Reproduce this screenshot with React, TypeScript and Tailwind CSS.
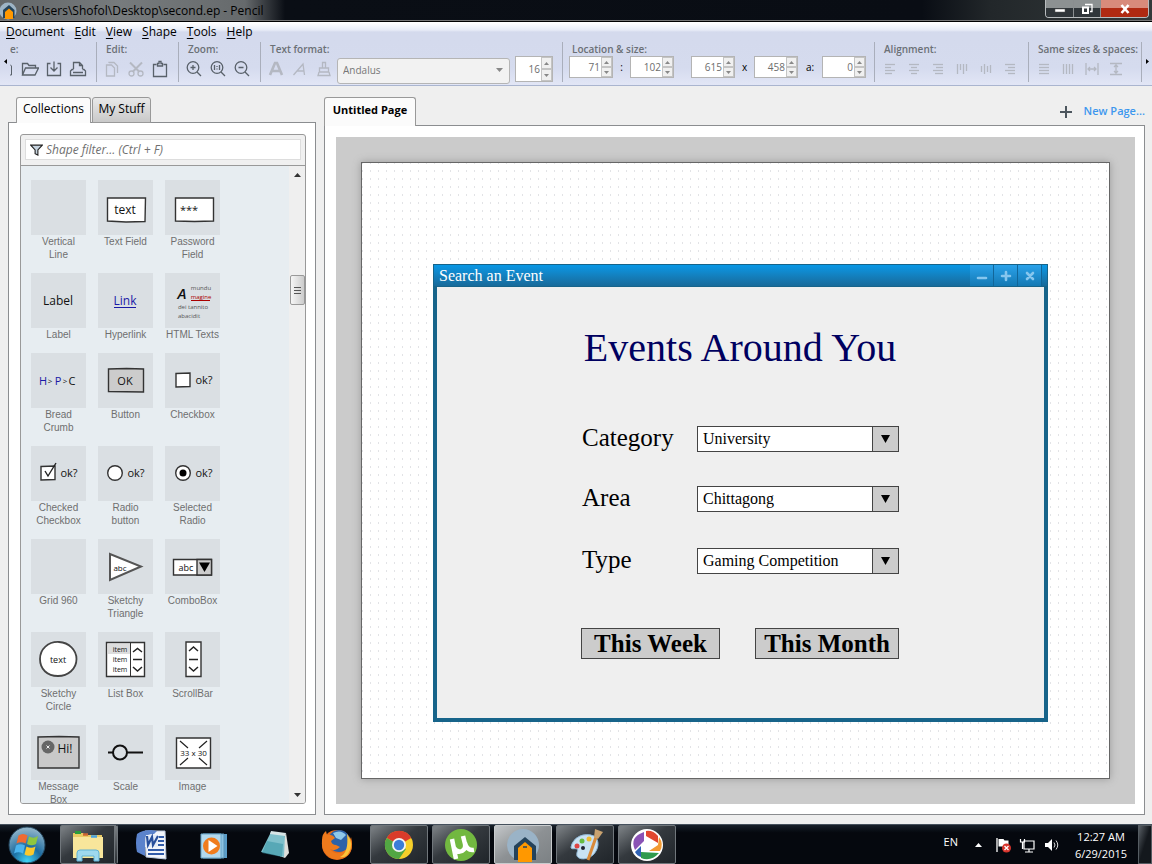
import type { ReactNode } from "react";

const NAVY = "#59616a";
const FAINT = "#b4b8c2";

function Ico({ children, faint = false }: { children: ReactNode; faint?: boolean }) {
  return (
    <svg width="18" height="18" viewBox="0 0 18 18" fill="none" stroke={faint ? FAINT : NAVY} strokeWidth="1.3" aria-hidden="true">
      {children}
    </svg>
  );
}

function Tool({ label, children }: { label: string; children: ReactNode }) {
  return (
    <button type="button" aria-label={label} className="flex h-6 w-6 shrink-0 items-center justify-center">
      {children}
    </button>
  );
}

function Group({ title, width, children }: { title: string; width: string; children: ReactNode }) {
  return (
    <div className={`flex h-10 shrink-0 flex-col border-r border-[#a9aebb] ${width}`}>
      <div className="h-[14px] pl-[9px] text-[10px] leading-[15px] font-semibold whitespace-nowrap text-[#6b7076]">{title}</div>
      <div className="flex h-[26px] items-center pl-[3px]">{children}</div>
    </div>
  );
}

function Spin({ label, value, tall = false }: { label: string; value: string; tall?: boolean }) {
  return (
    <div className={`flex shrink-0 border border-[#b4b4b4] bg-white ${tall ? "h-[26px] w-[38px]" : "mb-1 h-[22px] w-11"}`}>
      <input aria-label={label} defaultValue={value} className="min-w-0 flex-1 bg-white text-right text-[10px] text-[#6d6d6d] outline-none" />
      <div className="flex w-3 flex-col justify-between pl-px">
        {["up", "down"].map((d) => (
          <button key={d} type="button" aria-label={`${label} ${d}`} className="flex flex-1 items-center justify-center border border-[#c4c4c4] bg-[#f0f0f0]">
            <svg width="5" height="3" viewBox="0 0 5 3" aria-hidden="true">
              <path d={d === "up" ? "M0 3 2.5 0 5 3z" : "M0 0h5L2.5 3z"} fill="#888" />
            </svg>
          </button>
        ))}
      </div>
    </div>
  );
}

function TitleBar() {
  return (
    <header className="flex h-[22px] shrink-0 items-start border-b border-black bg-[linear-gradient(90deg,#626668_0px,#777b7d_120px,#666a6c_245px,#0a0e15_285px,#090d14_80%,#22272a_86%,#343a3b_100%)] shadow-[inset_0_-1px_0_#777]">
      <svg width="18" height="20" viewBox="0 0 18 20" className="shrink-0" aria-hidden="true">
        <circle cx="8" cy="11" r="8.5" fill="#9db4c6" />
        <path d="M3 18V10l6-5 5.500 5v8z" fill="#23435a" />
        <path d="M5 19v-7l4-3.500 4 3.500v7z" fill="#ff9800" />
      </svg>
      <h1 className="flex-1 pl-[3px] text-[12px] leading-[21px] font-normal whitespace-nowrap text-black">C:\Users\Shofol\Desktop\second.ep - Pencil</h1>
      <div className="mr-[3px] flex h-[18px] overflow-hidden rounded-b border border-t-0 border-[#b8bcbe]">
        <button type="button" aria-label="Minimize" className="flex w-7 items-center justify-center border-r border-[#8a8e90] bg-linear-to-b from-[#8c9192] from-45% to-[#30363a] to-50%">
          <svg width="12" height="12" aria-hidden="true"><path d="M1 6h10v3H1z" fill="#fff" stroke="#555" strokeWidth=".5" /></svg>
        </button>
        <button type="button" aria-label="Restore" className="flex w-[27px] items-center justify-center border-r border-[#8a8e90] bg-linear-to-b from-[#8c9192] from-45% to-[#30363a] to-50%">
          <svg width="12" height="12" fill="none" stroke="#fff" aria-hidden="true"><path d="M4 1.500h7v7H9" strokeWidth="1.300" /><path d="M2 4.500h5v5.500H2z" strokeWidth="2" /></svg>
        </button>
        <button type="button" aria-label="Close" className="flex w-[47px] items-center justify-center bg-linear-to-b from-[#d88b7b] from-45% to-[#b02a12] to-50%">
          <svg width="12" height="12" aria-hidden="true"><path d="M2.500 2l7 8M9.500 2l-7 8" stroke="#fff" strokeWidth="2.600" /></svg>
        </button>
      </div>
    </header>
  );
}

function MenuBar() {
  return (
    <nav className="flex h-5 shrink-0 gap-[10px] bg-linear-to-b from-white from-5% via-[#e8ecf7] via-40% to-[#d4daed] to-50% pl-[6px] text-[12px] leading-5 text-black">
      {["Document", "Edit", "View", "Shape", "Tools", "Help"].map((m) => (
        <button key={m} type="button"><span className="underline underline-offset-2">{m[0]}</span>{m.slice(1)}</button>
      ))}
    </nav>
  );
}

function Bars({ rows, vertical = false }: { rows: number[][]; vertical?: boolean }) {
  return (
    <Ico faint>
      {rows.map(([at, a, b], i) => (
        <path key={i} d={vertical ? `M${at} ${a}V${b}` : `M${a} ${at}H${b}`} />
      ))}
    </Ico>
  );
}

function Toolbar() {
  return (
    <div className="flex h-11 shrink-0 overflow-hidden border-b border-[#aab5cf] bg-linear-to-b from-[#d4daed] via-[#d5dbee] via-60% to-[#e2e6f6]">
      <div className="flex w-[10px] shrink-0 justify-center pt-[17px]"><svg width="3" height="5" aria-hidden="true"><path d="M3 0v5L0 2.500z" /></svg></div>
      <div className="flex h-10 w-[87px] shrink-0 flex-col overflow-hidden border-r border-[#a9aebb]">
        <div className="h-[14px] text-[10px] leading-[15px] font-semibold text-[#6b7076]">e:</div>
        <div className="flex h-[26px] items-center">
          <svg width="8" height="18" viewBox="0 0 8 18" fill="none" stroke={NAVY} aria-hidden="true"><path d="M0 4.500l1.500 1.500V15H0" /></svg>
          <Tool label="Open"><Ico><path d="M1.500 15V3.500h5l1.500 2h6.500V8M1.500 15l3-7h13l-3.500 7z" /></Ico></Tool>
          <Tool label="Save"><Ico><path d="M5.500 3.500h-3v12h13v-12h-3M9 1.500V11M5.500 7.500 9 11l3.500-3.500" /></Ico></Tool>
          <Tool label="Print"><Ico><path d="M4.500 9V2.500h6l3 3V9M10.500 2.500v3h3M4.500 9.500H3L1.500 11v4.500h15V11L15 9.500h-1.500M4 12.500h10" /></Ico></Tool>
        </div>
      </div>
      <Group title="Edit:" width="w-[82px]">
        <Tool label="Copy"><Ico faint><path d="M3.500 5v11h8v-8l-3-3zM6 3V2.500h5l3.500 3.500v7" /></Ico></Tool>
        <Tool label="Cut"><Ico faint><circle cx="4.500" cy="13.500" r="2.500" /><circle cx="13.500" cy="13.500" r="2.500" /><path d="M3 2.500 12 11.500M15 2.500 6 11.500" strokeWidth="2" /></Ico></Tool>
        <Tool label="Paste"><Ico><path d="M5.500 4.500h-3v12h13v-12h-3M6.500 6V3.500h1.500V1.500h2v2h1.500V6z" /></Ico></Tool>
      </Group>
      <Group title="Zoom:" width="w-[82px]">
        <Tool label="Zoom in"><Ico><circle cx="8" cy="7.500" r="5.800" /><path d="M12 12l4 4M5.500 7.500h5M8 5v5" /></Ico></Tool>
        <Tool label="Actual size"><Ico><circle cx="8" cy="7.500" r="5.800" /><path d="M12 12l4 4M5.500 5v5M10.500 5v5M8 6v1M8 8.500v1" /></Ico></Tool>
        <Tool label="Zoom out"><Ico><circle cx="8" cy="7.500" r="5.800" /><path d="M12 12l4 4M5.500 7.500h5" /></Ico></Tool>
      </Group>
      <Group title="Text format:" width="w-[302px]">
        <Tool label="Bold"><Ico faint><path d="M3 15 8 3h2l5 12M5.500 11h7" strokeWidth="2.600" /></Ico></Tool>
        <Tool label="Italic"><Ico faint><path d="M2.500 15 12 4l1.500 11M6 11h7" /></Ico></Tool>
        <Tool label="Clear format"><Ico faint><path d="M7.500 8V2.500h3V8M4.500 8h9v4h-9zM4 12l-1 3.500h12L14 12" /></Ico></Tool>
        <div className="relative mr-[5px] ml-px h-[26px] w-[173px] shrink-0">
          <select aria-label="Font" className="h-full w-full appearance-none rounded-[3px] border border-[#b5b5b5] bg-[#f2f2f2] pl-[5px] text-[10px] text-[#777] outline-none"><option>Andalus</option></select>
          <svg width="7" height="4" className="pointer-events-none absolute top-3 right-[7px]" aria-hidden="true"><path d="M0 0h7L3.500 4z" fill="#888" /></svg>
        </div>
        <Spin label="Font size" value="16" tall />
      </Group>
      <Group title="Location & size:" width="w-[312px]">
        <div className="flex items-center pl-[3px] text-[10px] text-black">
          <Spin label="X" value="71" /><span className="w-[17px] pb-1 text-center">:</span>
          <Spin label="Y" value="102" /><span className="w-[17px]" />
          <Spin label="Width" value="615" /><span className="w-[19px] pb-1 text-center">x</span>
          <Spin label="Height" value="458" /><span className="w-6 pb-1 text-center">a:</span>
          <Spin label="Angle" value="0" />
        </div>
      </Group>
      <Group title="Alignment:" width="w-[154px]">
        <Tool label="Align left"><Bars rows={[[4.5, 4, 14], [7.5, 4, 10], [10.5, 4, 14], [13.5, 4, 11]]} /></Tool>
        <Tool label="Align centre"><Bars rows={[[4.5, 4, 14], [7.5, 6, 12], [10.5, 4, 14], [13.5, 6, 12]]} /></Tool>
        <Tool label="Align right"><Bars rows={[[4.5, 4, 14], [7.5, 7, 14], [10.5, 4, 14], [13.5, 6, 14]]} /></Tool>
        <Tool label="Align top"><Bars vertical rows={[[4.5, 4, 14], [7.5, 4, 10], [10.5, 4, 14], [13.5, 4, 11]]} /></Tool>
        <Tool label="Align middle"><Bars vertical rows={[[4.5, 6, 12], [7.5, 4, 14], [10.5, 6, 12], [13.5, 5, 13]]} /></Tool>
        <Tool label="Align bottom"><Bars rows={[[4.5, 4, 14], [7.5, 7, 14], [10.5, 4, 14], [13.5, 7, 14]]} /></Tool>
      </Group>
      <Group title="Same sizes & spaces:" width="w-[113px]">
        <Tool label="Same width"><Bars rows={[[4.5, 4, 14], [7.5, 4, 14], [10.5, 4, 14], [13.5, 4, 14]]} /></Tool>
        <Tool label="Same height"><Bars vertical rows={[[4.5, 4, 14], [7.5, 4, 14], [10.5, 4, 14], [13.5, 4, 14]]} /></Tool>
        <Tool label="Horizontal spacing"><Ico faint><path d="M3 3v12M15 3v12M5 9h8M7 7 5 9l2 2M11 7l2 2-2 2" /></Ico></Tool>
        <Tool label="Vertical spacing"><Ico faint><path d="M3 3.500h12M3 14.500h12M9 5v8M7 7l2-2 2 2M7 11l2 2 2-2" /></Ico></Tool>
      </Group>
      <div className="flex flex-1 justify-center pt-[17px]"><svg width="3" height="5" aria-hidden="true"><path d="M0 0v5l3-2.500z" /></svg></div>
    </div>
  );
}

function T({ x, y, s = 11, fill = "#111", bold = false, children }: { x: number; y: number; s?: number; fill?: string; bold?: boolean; children: ReactNode }) {
  return <text x={x} y={y} fontSize={s} fill={fill} textAnchor="middle" stroke="none" fontWeight={bold ? 600 : 500} fontStyle={bold ? "italic" : "normal"}>{children}</text>;
}

const box = { fill: "#fff", stroke: "#333", strokeWidth: 1.4 };

const shapes: { name: string; art: ReactNode }[] = [
  { name: "Vertical\nLine", art: null },
  { name: "Text Field", art: <><path d="M9.500 18h38l-.5 23.500-19 .5-18.500-1z" {...box} /><T x={27} y={34} s={12}>text</T></> },
  { name: "Password\nField", art: <><path d="M10.500 18h38v23l-19 .500-19-.500z" {...box} /><T x={24} y={34} s={11}>***</T></> },
  { name: "Label", art: <T x={27} y={32} s={12}>Label</T> },
  { name: "Hyperlink", art: <><T x={27} y={32} s={12} fill="#1a1aa6">Link</T><path d="M16 34.500h22" stroke="#1a1aa6" /></> },
  { name: "HTML Texts", art: <><T x={17} y={26} s={15} bold>A</T><T x={36} y={17} s={6} fill="#555">mundu</T><T x={36} y={26} s={6} fill="#a00">magine</T><path d="M26 27.500h19" stroke="#a00" /><T x={28} y={36} s={6} fill="#555">dei tannito</T><T x={24} y={45} s={6} fill="#555">abacidit</T></> },
  { name: "Bread\nCrumb", art: <><T x={12} y={32} fill="#1a1aa6">H</T><T x={19} y={31} s={8}>&gt;</T><T x={27} y={32} fill="#1a1aa6">P</T><T x={34} y={31} s={8}>&gt;</T><T x={41} y={32}>C</T></> },
  { name: "Button", art: <><path d="M10.500 16l18-.500 17 .500v23l-35-.500z" {...box} fill="#ccc" /><T x={27} y={32}>OK</T></> },
  { name: "Checkbox", art: <><path d="M11 20.500l14-.500v13.500l-14 .500z" {...box} /><T x={39} y={31}>ok?</T></> },
  { name: "Checked\nCheckbox", art: <><path d="M10 20.500l14-.500v13.500l-14 .500z" {...box} /><path d="M14 25l3 5 8-13" fill="none" stroke="#222" strokeWidth="1.400" /><T x={38} y={31}>ok?</T></> },
  { name: "Radio\nbutton", art: <><circle cx="17" cy="27" r="7.300" {...box} /><T x={38} y={31}>ok?</T></> },
  { name: "Selected\nRadio", art: <><circle cx="18" cy="27" r="7.300" {...box} /><circle cx="18" cy="27" r="3.500" /><T x={39} y={31}>ok?</T></> },
  { name: "Grid 960", art: null },
  { name: "Sketchy\nTriangle", art: <><path d="M12 15v26l31-13.500z" {...box} strokeWidth="2" stroke="#555" /><T x={22} y={32} s={8}>abc</T></> },
  { name: "ComboBox", art: <><path d="M8.500 20.500h38V36h-38z" {...box} /><path d="M32 20.500h14.500V36H32z" {...box} fill="#ccc" /><path d="M34 23.500h11L39.500 33z" /><T x={21} y={32} s={9}>abc</T></> },
  { name: "Sketchy\nCircle", art: <><path d="M9 27C9 17 17 9.500 28 10c10 .500 17.500 8 17.500 17C45.500 37 37 44 27 44 16 44 9 37 9 27z" {...box} stroke="#444" strokeWidth="1.800" /><T x={27} y={31} s={9}>text</T></> },
  { name: "List Box", art: <><path d="M8.500 10.500h38v34h-38z" {...box} /><path d="M10 12h22v10H10z" fill="#ddd" /><path d="M32.500 10.500v34" stroke="#333" /><path d="M35 20l4.500-3.500L44 20M35 27.500h9M35 35l4.500 4 4.500-4" fill="none" stroke="#222" strokeWidth="1.500" /><T x={22} y={20} s={7}>item</T><T x={22} y={30} s={7}>item</T><T x={22} y={40} s={7}>item</T></> },
  { name: "ScrollBar", art: <><path d="M21 10h15v34.500H21z" {...box} /><path d="M24 19l4.500-4 4.500 4M24 27.500h9M24 35l4.500 4 4.500-4" fill="none" stroke="#222" strokeWidth="1.500" /></> },
  { name: "Message\nBox", art: <><path d="M7 12l21-.500 20 .500v31H7z" {...box} fill="#c9c9c9" /><circle cx="17" cy="22" r="6.500" fill="#666" /><path d="M15.500 20.500l3 3M18.500 20.500l-3 3" stroke="#eee" /><T x={34} y={28} s={12}>Hi!</T></> },
  { name: "Scale", art: <><path d="M10 27.500h35" stroke="#111" strokeWidth="2" /><circle cx="22" cy="27.500" r="7" fill="#dadfe3" stroke="#111" strokeWidth="2" /></> },
  { name: "Image", art: <><path d="M11.500 13h34v30h-34z" {...box} /><path d="M15 16l8 7M42 16l-8 7M15 40l8-7M42 40l-8-7" stroke="#222" strokeWidth="1.200" /><T x={28.5} y={31} s={8}>33 x 30</T></> },
];

function Sidebar() {
  return (
    <aside className="flex w-[308px] shrink-0 flex-col">
      <div role="tablist" className="z-10 -mb-px flex h-[26px] items-end gap-px pl-2 text-[12px] text-black">
        <button role="tab" aria-selected="true" type="button" className="h-[26px] w-[75px] rounded-t-[3px] border border-b-0 border-[#999] bg-[#fbfbfb] pb-[3px]">Collections</button>
        <button role="tab" aria-selected="false" type="button" className="h-[26px] w-[59px] rounded-t-[3px] border border-[#999] bg-linear-to-b from-[#e9e9e9] to-[#c9c9c9] pb-[2px]">My Stuff</button>
      </div>
      <div className="flex min-h-0 flex-1 border border-[#8b8d90] bg-white p-[11px] pr-[9px] pb-[10px]">
        <div className="flex min-w-0 flex-1 flex-col overflow-hidden rounded-[3px] border border-[#999] bg-[#f0f0f0]">
          <div className="shrink-0 border-b border-[#999] p-1 pb-[5px]">
            <label className="flex h-[21px] items-center gap-[3px] border border-[#ddd] bg-white pl-1">
              <svg width="13" height="12" viewBox="0 0 14 12" aria-hidden="true"><path d="M.8.8h12.400L8.500 6v5.500l-3-1.500V6z" fill="#c6d3df" stroke="#222" strokeWidth="1.200" /></svg>
              <input aria-label="Shape filter" placeholder="Shape filter... (Ctrl + F)" className="min-w-0 flex-1 text-[12px] italic outline-none placeholder:text-[#707070]" />
            </label>
          </div>
          <div className="flex min-h-0 flex-1">
            <ul className="grid min-w-0 flex-1 grid-cols-[repeat(3,55px)] content-start gap-3 overflow-hidden bg-[#e7edf1] pt-[14px] pl-[10px]">
              {shapes.map((s) => (
                <li key={s.name} className="text-center font-['Liberation_Sans',sans-serif] text-[10px] leading-[13px] whitespace-pre text-[#6f6f6f]">
                  <svg width="55" height="55" viewBox="0 0 55 55" className="block bg-[#dadfe3] font-['Open_Sans',sans-serif]" aria-hidden="true">{s.art}</svg>
                  {s.name}
                </li>
              ))}
            </ul>
            <div className="flex w-4 shrink-0 flex-col items-center bg-[#efefef] py-[6px]">
              <svg width="7" height="4" className="mt-px" aria-hidden="true"><path d="M0 4h7L3.500 0z" fill="#333" /></svg>
              <div className="mt-[98px] flex h-[30px] w-[15px] flex-col items-center justify-center gap-px rounded-[2px] border border-[#999] bg-linear-to-r from-[#f6f6f6] to-[#ccc]">
                <span className="h-px w-[7px] bg-[#555]" /><span className="mt-px h-px w-[7px] bg-[#555]" /><span className="mt-px h-px w-[7px] bg-[#555]" />
              </div>
              <svg width="7" height="4" className="mt-auto" aria-hidden="true"><path d="M0 0h7L3.500 4z" fill="#333" /></svg>
            </div>
          </div>
        </div>
      </div>
    </aside>
  );
}

function Field({ id, label, value, gap }: { id: string; label: string; value: string; gap: string }) {
  return (
    <div className={`flex h-[26px] items-start justify-between ${gap}`}>
      <label htmlFor={id} className="pl-px text-[25px] leading-6">{label}</label>
      <div className="relative flex h-[26px] w-[202px]">
        <select id={id} className="w-full appearance-none border border-[#444] bg-white pl-[5px] text-[16px] text-black outline-none"><option>{value}</option></select>
        <span className="pointer-events-none absolute inset-y-0 right-0 flex w-[27px] items-center justify-center border border-[#444] bg-[#ccc]">
          <svg width="9" height="8" aria-hidden="true"><path d="M0 0h9L4.500 8z" /></svg>
        </span>
      </div>
    </div>
  );
}

function Mockup() {
  return (
    <section className="flex min-h-0 min-w-0 flex-1 flex-col border-4 border-t-0 border-[#17648a] bg-[#efefef] font-['Liberation_Serif',serif] text-black">
      <div className="-mx-[3px] flex h-[23px] shrink-0 items-center border-y border-[#17648a] bg-linear-to-b from-[#0898e6] to-[#176a9a] pr-[5px] pl-[5px] text-white">
        <span className="flex-1 text-[16px] leading-[21px]">Search an Event</span>
        {["M2 8h8", "M6 2v8M2 6h8", "M3 3l6 6M9 3l-6 6"].map((d, i) => (
          <button key={d} type="button" aria-label={["Minimize", "Maximize", "Close"][i]} className="flex h-[21px] w-6 items-center justify-center border-r border-[#126699] bg-linear-to-b from-[#2aa2ea] to-[#1479b4]">
            <svg width="12" height="12" aria-hidden="true"><path d={d} stroke="#86c6ee" strokeWidth="2.600" strokeLinecap="round" /></svg>
          </button>
        ))}
      </div>
      <div className="flex flex-col items-center pr-px">
        <div className="w-full max-w-[318px]">
          <h2 className="mt-10 text-center text-[40px] leading-[42px] whitespace-nowrap text-[#000060]">Events Around You</h2>
          <Field id="category" label="Category" value="University" gap="mt-[57px]" />
          <Field id="area" label="Area" value="Chittagong" gap="mt-[34px]" />
          <Field id="type" label="Type" value="Gaming Competition" gap="mt-9" />
          <div className="mt-[54px] flex justify-between text-[25px] leading-[27px] font-bold">
            <button type="button" className="h-[31px] w-[139px] border border-[#444] bg-[#ccc]">This Week</button>
            <button type="button" className="h-[31px] w-36 border border-[#444] bg-[#ccc]">This Month</button>
          </div>
        </div>
      </div>
    </section>
  );
}

function Workspace() {
  return (
    <main className="flex min-w-0 flex-1 flex-col">
      <div className="z-10 -mb-px flex h-[29px] items-stretch justify-between">
        <button type="button" className="w-[92px] rounded-t-[3px] border border-b-0 border-[#999] bg-[#fbfbfb] pb-[3px] text-[11px] font-bold whitespace-nowrap text-black">Untitled Page</button>
        <button type="button" className="flex items-center gap-3 text-[11px] font-semibold text-[#3d97ee]">
          <svg width="12" height="12" aria-hidden="true"><path d="M6 0v12M0 6h12" stroke="#4d565e" strokeWidth="2" /></svg>
          New Page...
        </button>
      </div>
      <div className="flex min-h-0 flex-1 border border-[#8b8d90] bg-white p-[11px] pr-[9px] pb-[10px]">
        <div className="flex min-w-0 flex-1 bg-[#cbcbcb] p-[25px]">
          <div className="flex min-w-0 flex-1 border border-[#666] bg-white bg-[linear-gradient(90deg,#fff_7px,transparent_7px),linear-gradient(#fff_6px,#e2e3e6_6px)] bg-[length:8px_8px] bg-[position:1px_1px] pt-[101px] pr-[61px] pb-14 pl-[71px] shadow-[0_0_8px_#999]">
            <Mockup />
          </div>
        </div>
      </div>
    </main>
  );
}

const apps: { name: string; state: "idle" | "open" | "active"; art: ReactNode }[] = [
  { name: "Explorer", state: "open", art: <><path d="M3 6h10l2 2h17v22H3z" fill="#e9ca62" /><path d="M3 10h30v21H3z" fill="#f8e69b" /><path d="M5 5.500h6" stroke="#2b9c3c" strokeWidth="3" /><path d="M13 7.500h5" stroke="#c63" strokeWidth="2.500" /><path d="M21 9.500h6" stroke="#4aa3df" strokeWidth="2.500" /><path d="M7 34V26q0-3 3-3h16q3 0 3 3v8h-5v-5H12v5z" fill="#9ed8ee" stroke="#5fb1d4" /></> },
  { name: "Word", state: "idle", art: <><path d="M12 4h20l1 28-20-2z" fill="#f2f5fa" stroke="#bbc8dd" /><path d="M26 10h5M25 14h6M25 18h6M15 23h16M15 27h16" stroke="#315ba8" strokeWidth="1.800" /><path d="M4 7q5-4 14-4l6 1-3 3q-8 0-9 4v18l-8-4q-2-9 0-18z" fill="#5b83cc" /><path d="M13 8h12v12H12z" fill="#e4ecf8" /><path d="M14 9l1 9 4-8 1 8 5-9" fill="none" stroke="#274f9c" strokeWidth="2.200" /></> },
  { name: "Media Player", state: "idle", art: <><path d="M10 7h22v24H10z" fill="#5a9cc8" /><path d="M8 7h21v24H8z" fill="#8bc1e0" stroke="#5b94b8" /><path d="M6 7h20v24H6z" fill="#b3d9ee" stroke="#6aa6c8" /><circle cx="16.500" cy="19" r="8.500" fill="#f07c1d" /><path d="M13.500 13l9 6-9 6z" fill="#fff" /></> },
  { name: "Notepad", state: "idle", art: <><path d="M29 6l3 20-4 5-8-3z" fill="#dedfdb" /><path d="M14 5l14 2-1 23-23-5z" fill="#7fc0cb" /><path d="M14 4l15 2-1 3-15-2z" fill="#d7e5e6" /><path d="M10 14l16 3-1 13-20-4z" fill="#3793a6" opacity=".55" /></> },
  { name: "Firefox", state: "idle", art: <><circle cx="18" cy="18" r="15" fill="#e66a18" /><circle cx="20" cy="14" r="11" fill="#2b62a8" /><path d="M14 6q8-4 13 2l-5 5-5-2z" fill="#8fc9ea" /><path d="M3 13q0-6 4-9l1 4q5-1 8 3l-4 3q1 4 5 4l4 2q-5 5-10 2 7 9 18-1l3-11q4 16-7 21-11 4-18-4-5-6-4-14z" fill="#ee7a1c" /><path d="M28 7q8 10 1 20-3 4-8 3 9-4 7-23z" fill="#fbc43a" /></> },
  { name: "Chrome", state: "open", art: <><circle cx="18" cy="18" r="14" fill="#f6cf2a" /><path d="M18 18 5.800 11A14 14 0 0 1 30.200 11z" fill="#d93b2b" /><path d="M18 18 5.800 11A14 14 0 0 0 18 32l7-10z" fill="#52a743" /><circle cx="18" cy="18" r="7" fill="#f4f4f4" /><circle cx="18" cy="18" r="5.200" fill="#3b7dd8" /></> },
  { name: "Torrent", state: "open", art: <><circle cx="18" cy="18" r="16" fill="#72b840" /><path d="M9 12l4 20M11 21q3 5 8 3 4-2 3-7l-2-8M22 16q2 8 9 7" fill="none" stroke="#fff" strokeWidth="4.500" /></> },
  { name: "Pencil", state: "active", art: <><circle cx="18" cy="18" r="16" fill="#9ab3c7" /><path d="M9 33V19l11-9 11 9v14z" fill="#25435b" /><path d="M13 35V21l7-6 7 6v14z" fill="#ff9800" /><path d="M18 20h4" stroke="#25435b" strokeWidth="1.500" /></> },
  { name: "Paint", state: "open", art: <><path d="M4 20C6 10 17 5 27 9c6 4 5 13-1 19-6 5-14 5-16 1-1-4 2-6 0-7-3-1-6 1-6-2z" fill="#c9e2f3" stroke="#8eb8d6" /><circle cx="10" cy="19" r="2.500" fill="#d44" /><circle cx="15" cy="14" r="2.500" fill="#6b4" /><circle cx="22" cy="12" r="2.500" fill="#eb3" /><circle cx="16" cy="21" r="2" fill="#223" /><path d="M21 33l8-23" stroke="#d98a3a" strokeWidth="3" /><path d="M27 10l1-8 8 3-5 7z" fill="#c9a26f" /></> },
  { name: "Picasa", state: "open", art: <><circle cx="18" cy="18" r="16" fill="#fff" /><path d="M15 5v9L6 23Q0 10 15 5z" fill="#8a52b5" /><path d="M17 4q7-1 12 5v7L17 9z" fill="#e2472f" /><path d="M30 10q5 7 1 14H20l9-6z" fill="#f29a32" /><path d="M30 26q-8 9-18 5v-6z" fill="#2f9a4d" /><path d="M6 25l6-6v11q-4-1-6-5z" fill="#2f62b5" /></> },
];

const stateClass = {
  idle: "border-transparent",
  open: "border-[#70767b] bg-linear-to-br from-[#767b7f] from-5% via-[#34393e] via-45% to-[#20252a]",
  active: "border-[#c8cbcd] bg-linear-to-br from-[#c4c7c9] via-[#8d9194] via-50% to-[#7c8184]",
};

function Taskbar() {
  return (
    <footer className="flex h-10 shrink-0 items-stretch border-t border-[#45505c] bg-linear-to-b from-[#18202a] to-[#05080e] to-20% text-white">
      <button type="button" aria-label="Start" className="w-[54px] shrink-0 pl-2">
        <svg width="38" height="38" viewBox="0 0 38 38" aria-hidden="true">
          <defs><radialGradient id="orb" cx=".5" cy=".95" r=".9"><stop offset="0" stopColor="#3fd4f5" /><stop offset=".45" stopColor="#1c6ba0" /><stop offset="1" stopColor="#8fb3c8" /></radialGradient></defs>
          <circle cx="19" cy="19" r="18" fill="url(#orb)" stroke="#24455c" />
          <path d="M10.500 9.500q4.500-3 9 0l-2 8q-4.500-2.500-9 0z" fill="#ef6a32" /><path d="M21 10.500q4.500 2.500 9-.500l-2 8q-4.500 2.500-9 0z" fill="#8fc63f" />
          <path d="M8 19.500q4.500-2.500 9 0l-2 8q-4.500-2.500-9 0z" fill="#4bb4ee" /><path d="M18.500 20.500q4.500 2.500 9 0l-2 8q-4.500 2.500-9 0z" fill="#fbc82c" />
        </svg>
      </button>
      <div className="ml-[6px] flex gap-1">
        {apps.map((a) => (
          <button key={a.name} type="button" aria-label={a.name} className={`flex w-[58px] items-center justify-center rounded-[2px] border ${a.name === "Explorer" ? "border-r-4 border-double" : ""} ${stateClass[a.state]}`}>
            <svg width="36" height="36" viewBox="0 0 36 36" aria-hidden="true">{a.art}</svg>
          </button>
        ))}
      </div>
      <div className="ml-auto flex items-center text-[11px]">
        <span className="mr-[17px] mb-1">EN</span>
        <svg width="7" height="4" aria-hidden="true"><path d="M0 4h7L3.500 0z" fill="#fff" /></svg>
        <svg width="64" height="18" viewBox="0 0 64 18" className="ml-[14px]" aria-hidden="true">
          <path d="M1 2v14" stroke="#fff" strokeWidth="1.300" /><path d="M2.500 3h5l1 1.500h4v7h-5l-1-1h-4z" fill="#fff" /><circle cx="10.500" cy="12" r="4.500" fill="#d7342c" /><path d="M8.500 10l4 4M12.500 10l-4 4" stroke="#fff" strokeWidth="1.300" />
          <path d="M28 5h10v8H28zM29 16h8M33 13v3M24.500 3v3h4V3M26.500 6v7" fill="none" stroke="#fff" strokeWidth="1.200" />
          <path d="M49 7h3l4-4v12l-4-4h-3z" fill="#fff" /><path d="M58 6.500q2 2.500 0 5M60 4.500q3.500 4.500 0 9" fill="none" stroke="#ddd" />
        </svg>
        <div className="ml-[10px] w-[62px] text-center leading-[17px] whitespace-nowrap"><div>12:27 AM</div><div>6/29/2015</div></div>
        <button type="button" aria-label="Show desktop" className="ml-[6px] h-full w-[14px] border border-[#555c62] bg-linear-to-br from-[#5a6066] to-[#14181d] to-50%" />
      </div>
    </footer>
  );
}

export default function App() {
  return (
    <div className="flex h-screen flex-col overflow-hidden bg-[#efefef] font-['Open_Sans','Noto_Sans',sans-serif]">
      <TitleBar />
      <MenuBar />
      <Toolbar />
      <div className="flex min-h-0 flex-1 gap-2 pt-[11px] pr-[7px] pb-[9px] pl-2">
        <Sidebar />
        <Workspace />
      </div>
      <Taskbar />
    </div>
  );
}
